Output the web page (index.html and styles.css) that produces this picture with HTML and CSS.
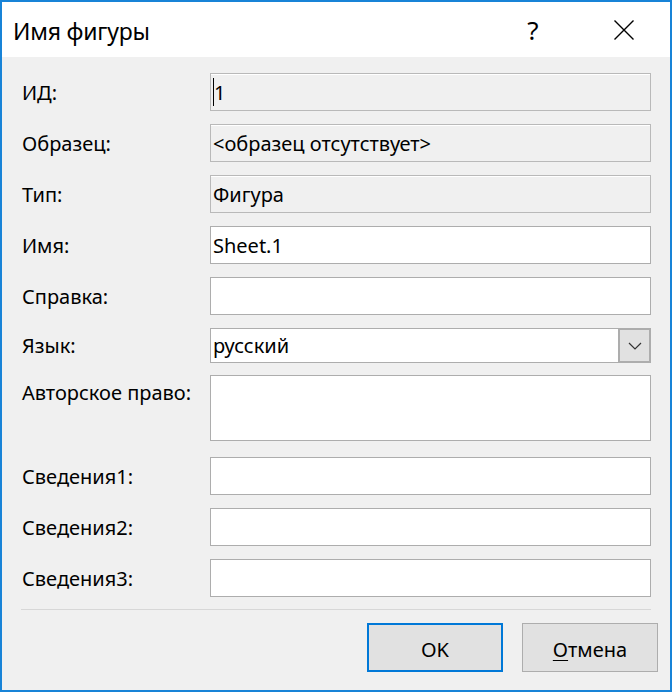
FILE: index.html
```html
<!DOCTYPE html>
<html lang="ru">
<head>
<meta charset="utf-8">
<title>Имя фигуры</title>
<link rel="stylesheet" href="styles.css">
</head>
<body>
<div class="window">
  <div class="titlebar">
    <div class="title">Имя фигуры</div>
    <div class="title-buttons">
      <span class="help">?</span>
      <svg class="close" width="22" height="22" viewBox="0 0 22 22"><path d="M1.5 1.5 L20.5 20.5 M20.5 1.5 L1.5 20.5" stroke="#000" stroke-width="1.4" fill="none"/></svg>
    </div>
  </div>
  <div class="content">
    <div class="form">
      <label class="lbl">ИД:</label>
      <div class="field ro"><span class="caret"></span>1</div>

      <label class="lbl">Образец:</label>
      <div class="field ro">&lt;образец отсутствует&gt;</div>

      <label class="lbl">Тип:</label>
      <div class="field ro">Фигура</div>

      <label class="lbl">Имя:</label>
      <div class="field">Sheet.1</div>

      <label class="lbl">Справка:</label>
      <div class="field"></div>

      <label class="lbl">Язык:</label>
      <div class="field combo">
        <span class="combo-text">русский</span>
        <span class="combo-btn"><svg width="14" height="8" viewBox="0 0 14 8"><path d="M1 1 L7 7 L13 1" stroke="#333" stroke-width="1.2" fill="none"/></svg></span>
      </div>

      <label class="lbl lbl-top">Авторское право:</label>
      <div class="field area"></div>

      <label class="lbl">Сведения1:</label>
      <div class="field"></div>

      <label class="lbl">Сведения2:</label>
      <div class="field"></div>

      <label class="lbl">Сведения3:</label>
      <div class="field"></div>
    </div>
    <div class="separator"></div>
    <div class="buttons">
      <button class="btn default">OK</button>
      <button class="btn"><u>О</u>тмена</button>
    </div>
  </div>
</div>
</body>
</html>
```

FILE: styles.css
```css
html, body {
  margin: 0;
  padding: 0;
  background: #f0f0f0;
}
body {
  font-family: "Segoe UI", "Noto Sans", "Open Sans", sans-serif;
  color: #000;
}
.window {
  width: 672px;
  height: 692px;
  box-sizing: border-box;
  border: 2px solid #1883d7;
  background: #f0f0f0;
  display: flex;
  flex-direction: column;
}
.titlebar {
  height: 55px;
  background: #fff;
  display: flex;
  align-items: center;
  justify-content: space-between;
  padding-left: 11px;
  flex: none;
}
.title {
  font-size: 23px;
  letter-spacing: -0.2px;
  margin-top: 3px;
}
.title-buttons {
  display: flex;
  align-items: center;
  height: 100%;
}
.help {
  font-size: 26px;
  width: 22px;
  text-align: center;
  margin-right: 69px;
  margin-top: 1px;
}
.close {
  margin-right: 35px;
  display: block;
}
.content {
  flex: 1;
  display: flex;
  flex-direction: column;
}
.form {
  display: grid;
  grid-template-columns: 188px 441px;
  row-gap: 13px;
  padding: 16px 0 0 20px;
  font-size: 20px;
}
.lbl {
  display: flex;
  align-items: center;
  white-space: nowrap;
}
.lbl-top {
  align-items: flex-start;
  padding-top: 4px;
  margin-top: -1px;
  margin-bottom: 3px;
}
.field {
  height: 38px;
  box-sizing: border-box;
  border: 1px solid #adadad;
  background: #fff;
  display: flex;
  align-items: center;
  padding-left: 2px;
  font-size: 20px;
  white-space: nowrap;
}
.field.ro {
  background: #f0f0f0;
  border-color: #b9b9b9;
  box-shadow: inset 0 1px 0 #fff;
}
.caret {
  display: inline-block;
  width: 1px;
  height: 28px;
  background: #000;
}
.combo {
  height: 35px;
  padding-right: 0;
  justify-content: space-between;
}
.combo-btn {
  width: 32px;
  height: 100%;
  box-sizing: border-box;
  background: #e1e1e1;
  border: 1px solid #adadad;
  border-left-width: 2px;
  display: flex;
  align-items: center;
  justify-content: center;
}
.combo-btn svg {
  display: block;
}
.area {
  height: 66px;
  margin-top: -1px;
  margin-bottom: 3px;
}
.separator {
  height: 1px;
  background: #d7d7d7;
  margin: 12px 19px 0 19px;
}
.buttons {
  display: flex;
  justify-content: flex-end;
  gap: 19px;
  padding: 13px 12px 0 0;
}
.btn {
  width: 136px;
  height: 49px;
  box-sizing: border-box;
  background: #e1e1e1;
  border: 1px solid #adadad;
  font-family: "Segoe UI", "Noto Sans", "Open Sans", sans-serif;
  font-size: 20px;
  color: #000;
  padding: 3px 0 0 0;
}
.btn.default {
  border: 2px solid #0078d7;
}
.btn u {
  text-decoration-thickness: 1px;
  text-underline-offset: 3px;
}
```
